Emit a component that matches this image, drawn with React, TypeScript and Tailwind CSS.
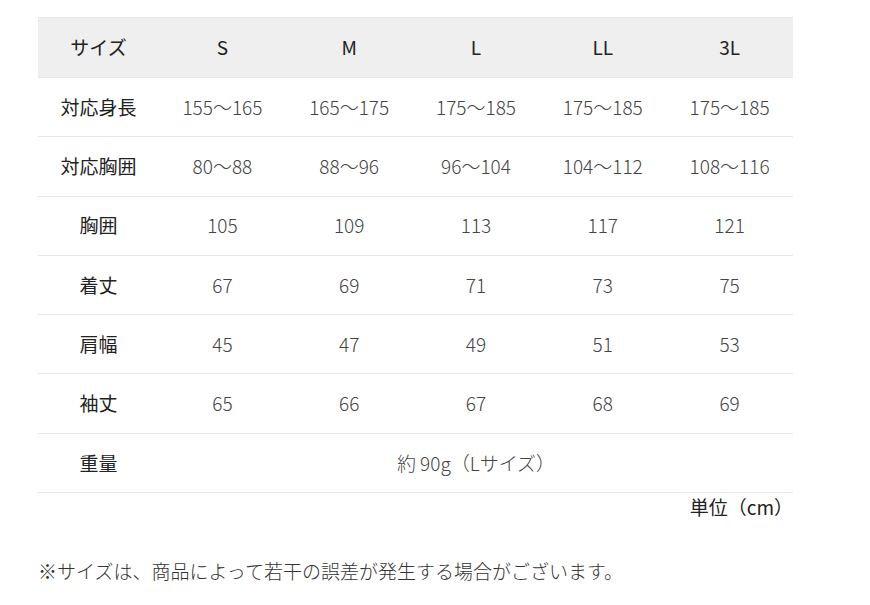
const font = { fontFamily: '"Noto Sans CJK JP", "Noto Sans", sans-serif' };

const sizes = ["S", "M", "L", "LL", "3L"];

const rows: [string, string[]][] = [
  ["対応身長", ["155〜165", "165〜175", "175〜185", "175〜185", "175〜185"]],
  ["対応胸囲", ["80〜88", "88〜96", "96〜104", "104〜112", "108〜116"]],
  ["胸囲", ["105", "109", "113", "117", "121"]],
  ["着丈", ["67", "69", "71", "73", "75"]],
  ["肩幅", ["45", "47", "49", "51", "53"]],
  ["袖丈", ["65", "66", "67", "68", "69"]],
];

export default function App() {
  return (
    <div className="w-[870px] h-[605px] bg-white text-[#333] pt-[17px]" style={font}>
      <div className="ml-[38px] w-[755px]">
        <table className="w-full table-fixed border-collapse text-[19px]">
          <colgroup>
            <col className="w-[121px]" />
            {sizes.map((s) => (
              <col key={s} />
            ))}
          </colgroup>
          <thead>
            <tr className="bg-[#efefef] h-[60px] border-t border-b border-[#e6e6e6]">
              <th className="font-normal text-center text-[#222]">サイズ</th>
              {sizes.map((s) => (
                <th key={s} className="font-normal text-center text-[#222]">
                  {s}
                </th>
              ))}
            </tr>
          </thead>
          <tbody>
            {rows.map(([label, vals]) => (
              <tr key={label} className="h-[59.3px] border-b border-[#e6e6e6]">
                <td className="text-center text-[#222]">{label}</td>
                {vals.map((v, i) => (
                  <td key={i} className="text-center font-light text-[#444]">
                    {v}
                  </td>
                ))}
              </tr>
            ))}
            <tr className="h-[59.3px] border-b border-[#e6e6e6]">
              <td className="text-center text-[#222]">重量</td>
              <td colSpan={5} className="text-center font-light text-[#444]">
                約 90g（Lサイズ）
              </td>
            </tr>
          </tbody>
        </table>
        <div className="text-right text-[19px] text-[#222] leading-[28px]">単位（cm）</div>
        <p className="mt-[36px] text-[19px] font-light text-[#333] leading-[28px]">
          ※サイズは、商品によって若干の誤差が発生する場合がございます。
        </p>
      </div>
    </div>
  );
}
